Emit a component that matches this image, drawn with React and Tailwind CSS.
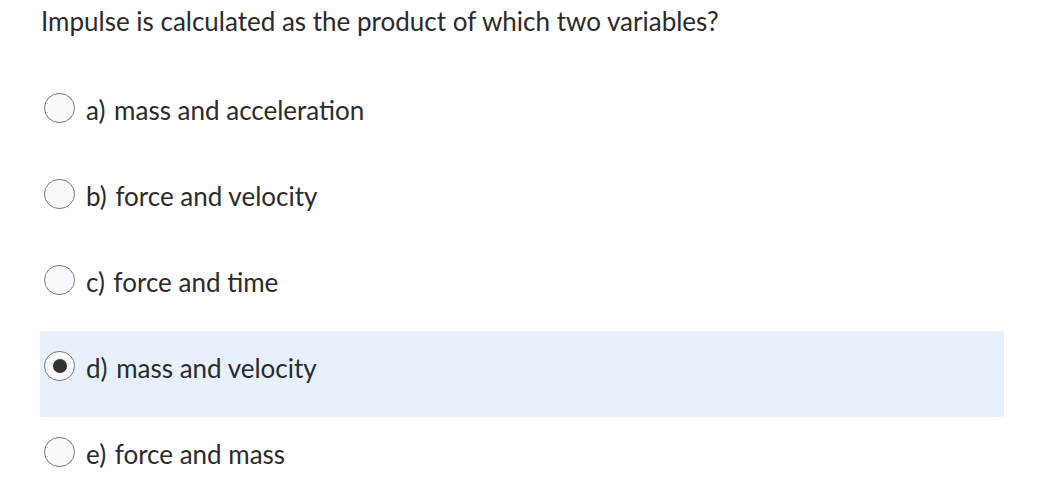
const options = [
  { id: "a", key: "a)", text: "mass and acceleration" },
  { id: "b", key: "b)", text: "force and velocity" },
  { id: "c", key: "c)", text: "force and time" },
  { id: "d", key: "d)", text: "mass and velocity" },
  { id: "e", key: "e)", text: "force and mass" },
];

function Radio({ checked }) {
  return (
    <span className="flex items-center justify-center w-[31px] h-[30px] rounded-full border border-[#7a7a7a] bg-[#f8f9fd] shrink-0">
      {checked && <span className="w-[14px] h-[14px] rounded-full bg-[#333333]" />}
    </span>
  );
}

export default function App() {
  const selected = "d";
  return (
    <div className="w-[1060px] h-[498px] bg-white text-[#2b2b2b] font-['Lato',sans-serif] overflow-hidden">
      <div className="pl-[41px] pt-[3px] h-[73px] text-[26px] leading-[36px]">
        Impulse is calculated as the product of which two variables?
      </div>
      <div className="ml-[40px] w-[964px]">
        {options.map((o) => (
          <div
            key={o.id}
            className={
              "h-[86px] flex items-start pt-[19px] pl-[4px] " +
              (o.id === selected ? "bg-[#e8f1fb]" : "")
            }
          >
            <span className="mt-[1px]">
              <Radio checked={o.id === selected} />
            </span>
            <span className="ml-[11px] text-[26px] leading-[36px]">
              {o.key} <span className="ml-[2px]">{o.text}</span>
            </span>
          </div>
        ))}
      </div>
    </div>
  );
}
